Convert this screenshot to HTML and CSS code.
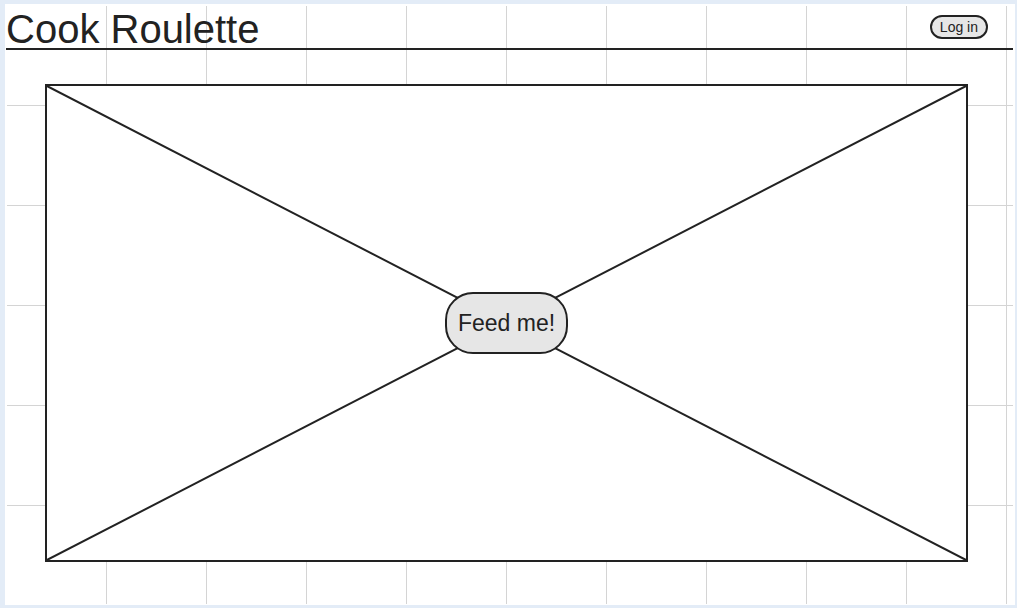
FILE: index.html
```html
<!DOCTYPE html>
<html lang="en">
<head>
    <meta charset="UTF-8">
    <meta name="viewport" content="width=device-width, initial-scale=1.0">
    <title>Cook Roulette</title>
    <link rel="stylesheet" href="styles.css">
</head>
<body>
    <div class="page">
        <header class="topbar">
            <h1 class="title">Cook Roulette</h1>
            <button class="login">Log in</button>
        </header>

        <div class="placeholder">
            <svg class="cross" viewBox="0 0 100 100" preserveAspectRatio="none">
                <line x1="0" y1="0" x2="100" y2="100"></line>
                <line x1="100" y1="0" x2="0" y2="100"></line>
            </svg>
            <button class="feed">Feed me!</button>
        </div>
    </div>
</body>
</html>
```

FILE: styles.css
```css
html {
    background: #e3ecf7;
}
body {
    margin: 0;
    font-family: 'Liberation Sans', Arial, sans-serif;
    color: #222;
}
.page {
    box-sizing: border-box;
    height: 601px;
    margin: 4px 2px 3px 5px;
    padding: 2px 2px 1px 2px;
    background-image:
        linear-gradient(to right, transparent 99px, #d4d4d4 99px),
        linear-gradient(to bottom, transparent 99px, #d4d4d4 99px),
        linear-gradient(#fff, #fff);
    background-size: 100px 100px, 100px 100px, auto;
    background-origin: content-box, content-box, border-box;
    background-clip: content-box, content-box, border-box;
}
.topbar {
    display: flex;
    justify-content: space-between;
    align-items: center;
    margin-left: -1px;
    padding-top: 4px;
    border-bottom: 2px solid #222;
}
.title {
    margin: 0;
    font-size: 40px;
    font-weight: normal;
    line-height: 38px;
}
.login {
    margin: 0 25px 4px 0;
    padding: 2px 8px;
    font-family: inherit;
    font-size: 14px;
    color: #222;
    background: #e6e6e6;
    border: 2px solid #222;
    border-radius: 12px;
}
.placeholder {
    position: relative;
    box-sizing: border-box;
    width: 923px;
    height: 478px;
    margin: 34px 0 0 38px;
    background: #fff;
    border: 2px solid #222;
    display: flex;
    align-items: center;
    justify-content: center;
}
.cross {
    position: absolute;
    top: 0;
    left: 0;
    width: 100%;
    height: 100%;
}
.cross line {
    stroke: #222;
    stroke-width: 2;
    vector-effect: non-scaling-stroke;
}
.feed {
    position: relative;
    padding: 0 11px;
    font-family: inherit;
    font-size: 23px;
    line-height: 58px;
    color: #222;
    background: #e6e6e6;
    border: 2px solid #222;
    border-radius: 28px;
}
```
